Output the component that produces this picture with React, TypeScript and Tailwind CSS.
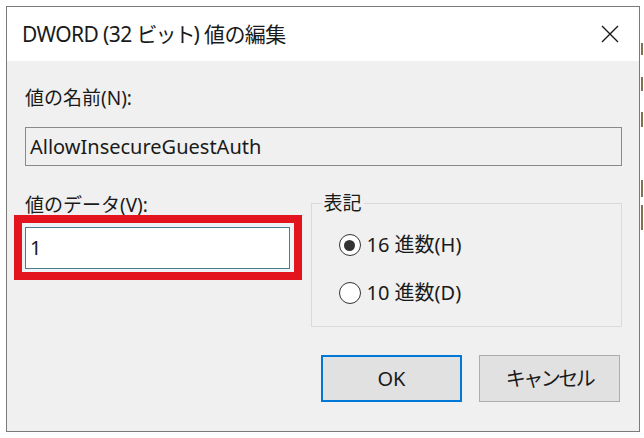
import React from "react";

const font = "font-['Noto_Sans','Noto_Sans_CJK_JP',sans-serif]";

type radioProps = {
  label: string;
  checked?: boolean;
};

const Radio: React.FC<radioProps> = ({ label, checked }) => {
  return (
    <div className="flex items-center h-[24px]">
      <span className="w-[22px] h-[22px] rounded-full border-[1.5px] border-[#333333] bg-white flex items-center justify-center ml-[27px]">
        {checked && <span className="w-[11px] h-[11px] rounded-full bg-[#333333]" />}
      </span>
      <span className="ml-[6px] text-[20px] leading-[24px] text-[#1a1a1a]">{label}</span>
    </div>
  );
};

const App: React.FC = () => {
  return (
    <div className={`w-[644px] h-[438px] bg-white flex ${font}`}>
      <div className="mt-[6px] ml-[6px] w-[634px] h-[426px] border border-[#7a7a7a] flex flex-col">
        {/* title bar */}
        <div className="h-[54px] bg-white flex items-center justify-between pl-[15px] pr-[20px]">
          <span className="text-[21px] leading-[28px] text-[#1a1a1a] tracking-[-0.6px]">
            DWORD (32 <span className="tracking-[-2px]">ビット</span>) 値の編集
          </span>
          <svg width="18" height="18" viewBox="0 0 18 18">
            <path d="M1 1 L17 17 M17 1 L1 17" stroke="#1a1a1a" strokeWidth="1.4" fill="none" />
          </svg>
        </div>

        {/* body */}
        <div className="flex-1 bg-[#f0f0f0] pl-[18px] pr-[17px] pt-[27px] flex flex-col">
          <div className="text-[19px] leading-[20px] text-[#1a1a1a]">値の名前(N):</div>
          <div className="mt-[19px] h-[39px] border border-[#8a8a8a] bg-[#f0f0f0] pl-[4px] flex items-center text-[20px] text-[#1a1a1a]">
            AllowInsecureGuestAuth
          </div>

          <div className="mt-[27px] flex">
            <div className="w-[286px] pt-[2px] flex flex-col">
              <div className="text-[19px] leading-[20px] text-[#1a1a1a]">値のデータ(V):</div>
              <div className="-ml-[11px] w-[288px] border-[8px] border-[#e3141d] bg-[#eef3f5] pt-[4px] pb-[3px] pl-[3px] pr-[4px]">
                <div className="h-[42px] border border-[#4e7b8e] bg-white pl-[4px] flex items-center text-[20px] text-[#1a1a1a]">
                  1
                </div>
              </div>
            </div>

            <fieldset className="w-[312px] border border-[#dadada] px-[10px] m-0">
              <legend className="px-[2px] text-[19px] leading-[20px] text-[#1a1a1a]">表記</legend>
              <div className="pt-[20px] pb-[21px] flex flex-col gap-[24px] -ml-[10px]">
                <Radio label="16 進数(H)" checked />
                <Radio label="10 進数(D)" />
              </div>
            </fieldset>
          </div>

          <div className="mt-[28px] flex justify-end gap-[17px] pr-[2px]">
            <button className="w-[141px] h-[47px] bg-[#e1e1e1] border-2 border-[#0078d7] text-[20px] text-[#1a1a1a]">
              OK
            </button>
            <button className="w-[141px] h-[47px] bg-[#e1e1e1] border border-[#adadad] text-[20px] text-[#1a1a1a] tracking-[-2.5px]">
              キャンセル
            </button>
          </div>
        </div>
      </div>

      {/* edge of the window behind */}
      <div className="w-[4px] flex flex-col pl-[1px]">
        <div className="mt-[43px] h-[12px] w-[2px] bg-[#86704f]" />
        <div className="mt-[22px] h-[14px] w-[2px] bg-[#86704f]" />
        <div className="mt-[21px] h-[15px] w-[2px] bg-[#86704f]" />
        <div className="mt-[53px] h-[17px] w-[2px] bg-[#86704f]" />
        <div className="mt-[8px] h-[25px] w-[2px] bg-[#86704f]" />
      </div>
    </div>
  );
};

export default App;
